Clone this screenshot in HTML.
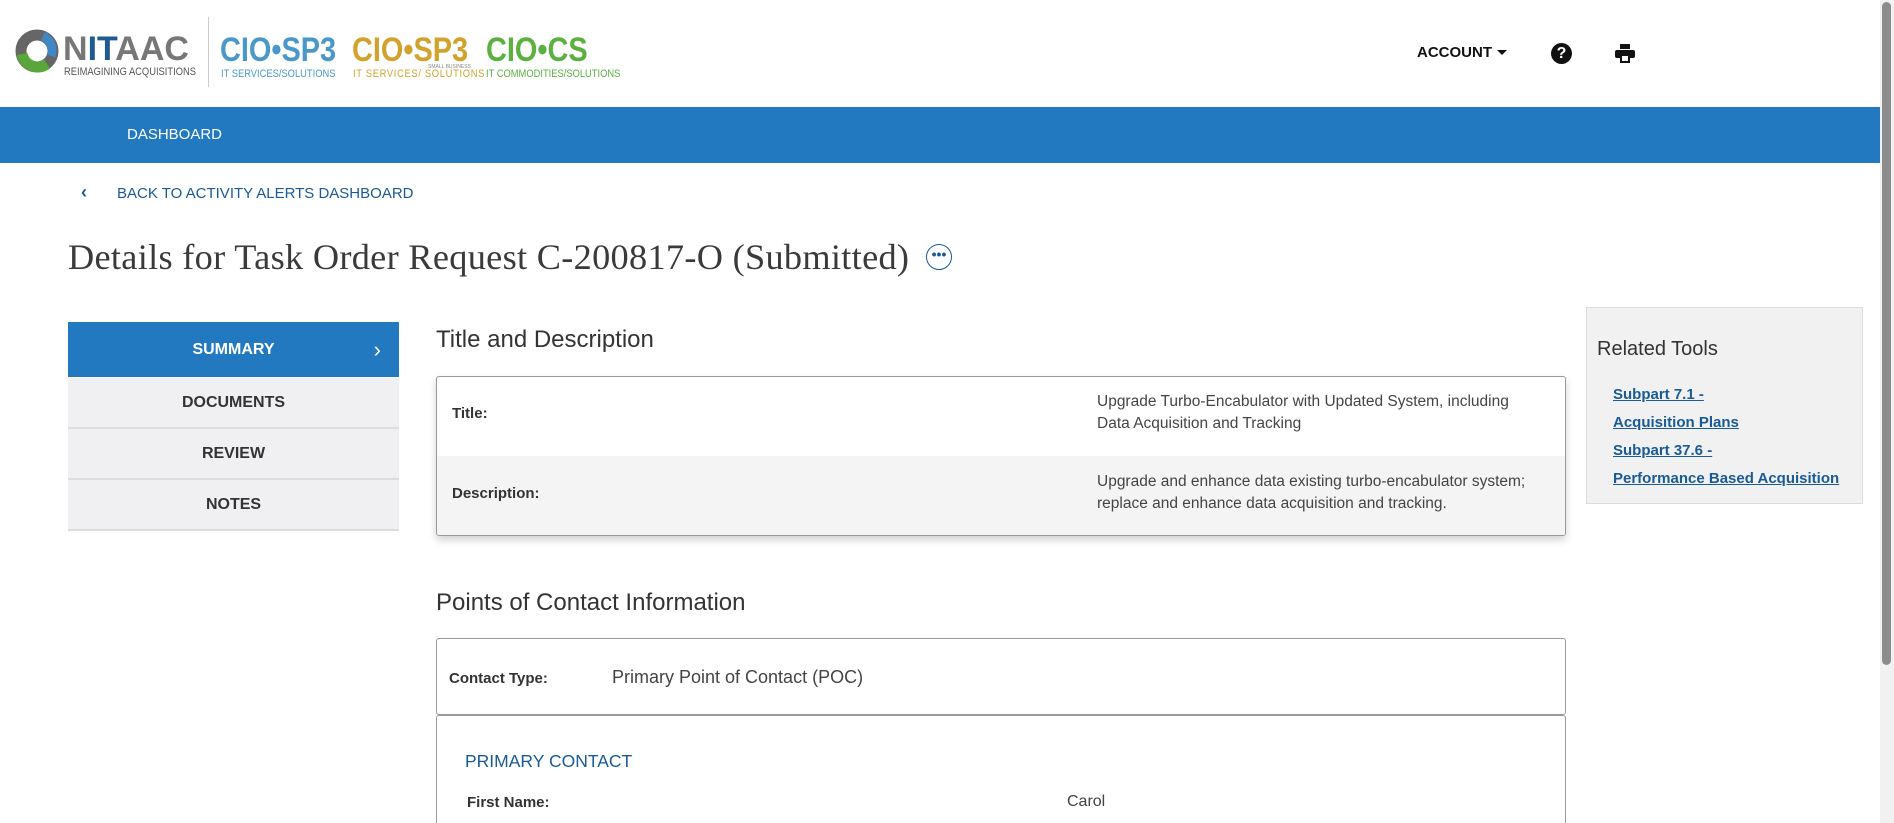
<!DOCTYPE html>
<html style="width:1894px;height:823px;overflow:hidden"><head><meta charset="utf-8"><style>
*{margin:0;padding:0;box-sizing:border-box}
body{width:1894px;height:823px;overflow:hidden;background:#fff;font-family:"Liberation Sans",Arial,sans-serif;color:#333;position:relative}
.a{position:absolute;white-space:nowrap}
.sx{transform:scaleX(0.85);transform-origin:0 0}
.lbl{font-size:15px;font-weight:bold;color:#333}
.val{font-size:15.5px;color:#444;line-height:22px}
.nav div{position:absolute;left:68px;width:331px;background:#f0f0f2;border-bottom:2px solid #ddd;text-align:center;font-size:16px;font-weight:bold;color:#333}
.rt a{display:block;color:#1a5a96;font-weight:bold;font-size:15px;text-decoration:underline;line-height:28px}
</style></head><body>
<!-- logo -->
<svg class="a" style="left:13px;top:28px" width="48" height="46" viewBox="0 0 48 46">
<circle cx="24" cy="23" r="16" fill="none" stroke="#666" stroke-width="11"/>
<path d="M9 26 A16 16 0 0 0 34 36" fill="none" stroke="#5aa63a" stroke-width="11"/>
<path d="M30 8 A16 16 0 0 1 38 28" fill="none" stroke="#3f88c5" stroke-width="9"/>
</svg>
<div class="a" style="left:63px;top:31px;font-size:34px;font-weight:bold;color:#777;line-height:36px"><span>N</span><span style="color:#1f5a92">IT</span>AAC</div>
<div class="a sx" style="left:64px;top:66px;font-size:11px;color:#555;line-height:12px">REIMAGINING ACQUISITIONS</div>
<div class="a" style="left:208px;top:17px;width:1px;height:70px;background:#ccc"></div>
<div class="a sx" style="left:220px;top:33px;font-size:34px;font-weight:bold;color:#4a98c9;line-height:34px">CIO•SP3</div>
<div class="a sx" style="left:221px;top:68px;font-size:11px;color:#4a98c9">IT SERVICES/SOLUTIONS</div>
<div class="a sx" style="left:352px;top:33px;font-size:34px;font-weight:bold;color:#d1a32d;line-height:34px">CIO•SP3</div>
<div class="a" style="left:428px;top:64px;font-size:5px;color:#888">SMALL BUSINESS</div>
<div class="a sx" style="left:353px;top:68px;font-size:11px;color:#d1a32d;letter-spacing:0.8px">IT SERVICES/ SOLUTIONS</div>
<div class="a sx" style="left:486px;top:33px;font-size:34px;font-weight:bold;color:#5bb040;line-height:34px">CIO•CS</div>
<div class="a sx" style="left:486px;top:68px;font-size:11px;color:#5bb040">IT COMMODITIES/SOLUTIONS</div>
<!-- top right -->
<div class="a" style="left:1417px;top:44px;font-size:15px;font-weight:bold;color:#111">ACCOUNT</div>
<div class="a" style="left:1497px;top:50px;border-left:5px solid transparent;border-right:5px solid transparent;border-top:5px solid #111"></div>
<div class="a" style="left:1551px;top:43px;width:21px;height:21px;border-radius:50%;background:#111;color:#fff;font-weight:bold;font-size:16px;text-align:center;line-height:21px">?</div>
<svg class="a" style="left:1615px;top:44px" width="20" height="19" viewBox="0 0 20 19"><rect x="5" y="0" width="10" height="5" fill="#111"/><rect x="0" y="6" width="20" height="8" rx="2" fill="#111"/><rect x="5" y="11" width="10" height="8" fill="#111"/><rect x="7" y="12" width="6" height="5" fill="#fff"/></svg>
<!-- scrollbar -->
<div class="a" style="left:1880px;top:0;width:14px;height:823px;background:#f1f1f1"></div>
<div class="a" style="left:1882px;top:2px;width:9px;height:663px;background:#8c8c8c;border-radius:5px"></div>
<!-- bar -->
<div class="a" style="left:0;top:107px;width:1880px;height:56px;background:#2379c0"></div>
<div class="a" style="left:127px;top:126px;font-size:15px;color:#fff">DASHBOARD</div>
<!-- back -->
<div class="a" style="left:81px;top:182px;font-size:18px;color:#1a5a96;font-weight:bold">‹</div>
<div class="a" style="left:117px;top:185px;font-size:15px;color:#1a5a96">BACK TO ACTIVITY ALERTS DASHBOARD</div>
<div class="a" style="left:68px;top:236px;font-family:'Liberation Serif',serif;font-size:36.3px;color:#3a3a3a;letter-spacing:0.3px">Details for Task Order Request C-200817-O (Submitted)</div>
<div class="a" style="left:926px;top:244px;width:26px;height:26px;border:1.5px solid #1a5a96;border-radius:50%;color:#1a5a96;font-size:14px;font-weight:bold;text-align:center;line-height:18px">•••</div>
<!-- nav -->
<div class="nav">
<div style="top:322px;height:55px;line-height:55px;background:#2379c0;color:#fff;border:none">SUMMARY<span style="position:absolute;right:18px;font-size:22px;font-weight:normal">›</span></div>
<div style="top:378px;height:51px;line-height:49px">DOCUMENTS</div>
<div style="top:429px;height:51px;line-height:49px">REVIEW</div>
<div style="top:480px;height:51px;line-height:49px">NOTES</div>
</div>
<!-- title & desc -->
<div class="a" style="left:436px;top:326px;font-size:24px;color:#333">Title and Description</div>
<div class="a" style="left:436px;top:376px;width:1130px;height:160px;border:1px solid #999;border-radius:3px;box-shadow:0 4px 8px rgba(0,0,0,.18);overflow:hidden">
<div style="position:absolute;left:0;top:79px;width:100%;height:81px;background:#f4f4f4"></div>
</div>
<div class="a lbl" style="left:452px;top:405px">Title:</div>
<div class="a val" style="left:1097px;top:391px">Upgrade Turbo-Encabulator with Updated System, including<br>Data Acquisition and Tracking</div>
<div class="a lbl" style="left:452px;top:485px">Description:</div>
<div class="a val" style="left:1097px;top:471px">Upgrade and enhance data existing turbo-encabulator system;<br>replace and enhance data acquisition and tracking.</div>
<!-- poc -->
<div class="a" style="left:436px;top:589px;font-size:24px;color:#333">Points of Contact Information</div>
<div class="a" style="left:436px;top:638px;width:1130px;height:77px;border:1px solid #999;border-radius:3px"></div>
<div class="a lbl" style="left:449px;top:670px">Contact Type:</div>
<div class="a" style="left:612px;top:667px;font-size:18px;color:#444">Primary Point of Contact (POC)</div>
<div class="a" style="left:436px;top:715px;width:1130px;height:108px;border:1px solid #999;border-bottom:none;border-radius:3px 3px 0 0"></div>
<div class="a" style="left:465px;top:751px;font-size:17.5px;color:#1a5a96">PRIMARY CONTACT</div>
<div class="a lbl" style="left:467px;top:794px">First Name:</div>
<div class="a" style="left:1067px;top:793px;font-size:16px;color:#444">Carol</div>
<!-- related -->
<div class="a" style="left:1586px;top:307px;width:277px;height:197px;background:#f1f1f2;border:1px solid #ddd"></div>
<div class="a" style="left:1597px;top:338px;font-size:20px;color:#333">Related Tools</div>
<div class="a rt" style="left:1613px;top:381px"><a>Subpart 7.1 -</a><a>Acquisition Plans</a><a>Subpart 37.6 -</a><a>Performance Based Acquisition</a></div>
</body></html>
